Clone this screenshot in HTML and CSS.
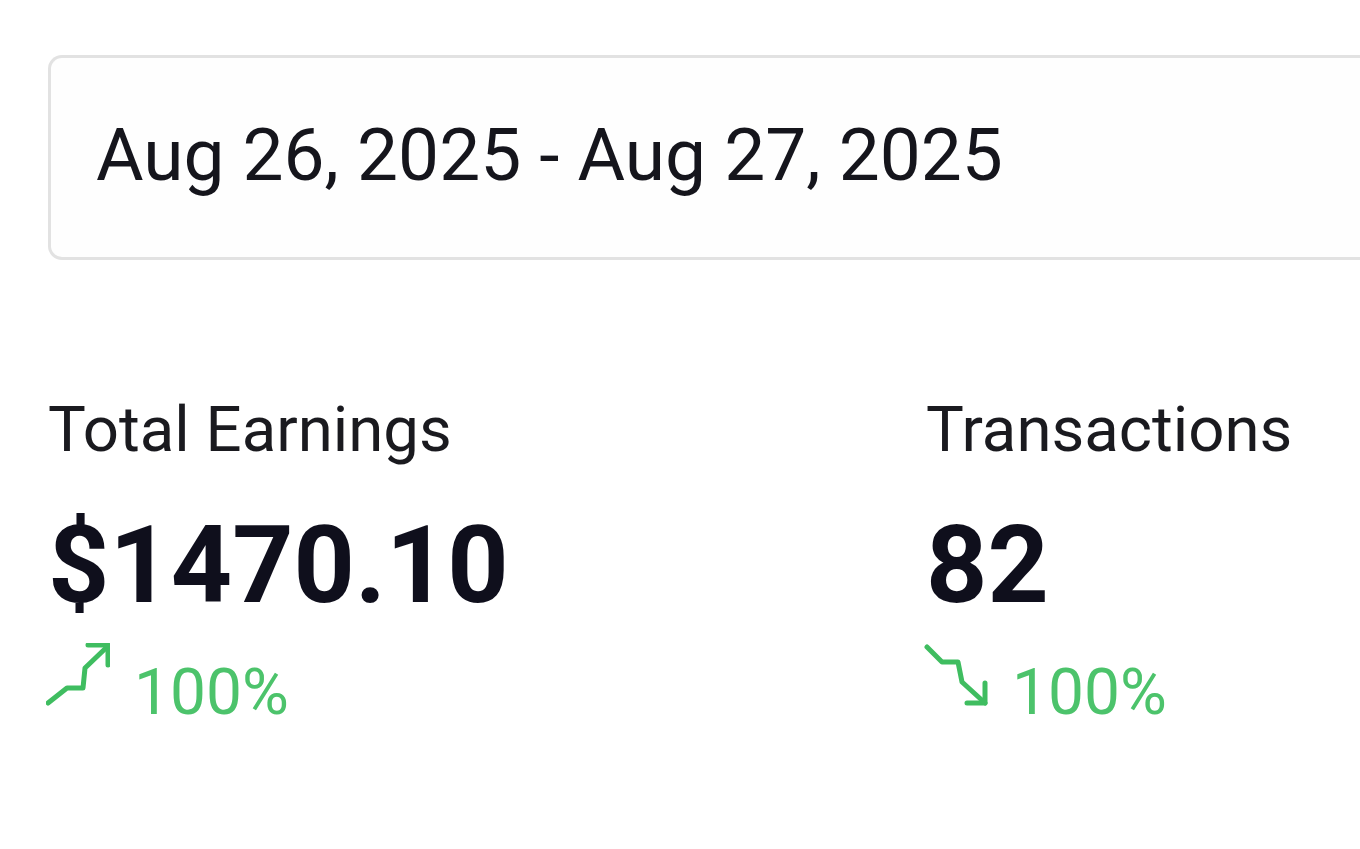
FILE: index.html
```html
<!DOCTYPE html>
<html lang="en">
<head>
<meta charset="utf-8">
<title>Earnings</title>
<link rel="stylesheet" href="styles.css">
</head>
<body>
<main class="page">
  <div class="date-box">
    <span class="date-text">Aug 26, 2025 - Aug 27, 2025</span>
  </div>
  <section class="stats">
    <div class="stat">
      <div class="stat-label">Total Earnings</div>
      <div class="stat-value">$1470.10</div>
      <div class="stat-change">
        <svg class="trend" viewBox="0 0 64 64" width="64" height="64" aria-hidden="true">
          <polyline points="2,60 21,45 37,45 39,25 62,3" fill="none" stroke="currentColor" stroke-width="5" stroke-linecap="round" stroke-linejoin="round"/>
          <polyline points="42,2 62,2 62,22" fill="none" stroke="currentColor" stroke-width="5" stroke-linecap="round" stroke-linejoin="round"/>
        </svg>
        <span class="pct">100%</span>
      </div>
    </div>
    <div class="stat">
      <div class="stat-label">Transactions</div>
      <div class="stat-value">82</div>
      <div class="stat-change">
        <svg class="trend" viewBox="0 0 64 64" width="64" height="64" aria-hidden="true">
          <polyline points="3,4 18,19 34,19 38,39 61,60" fill="none" stroke="currentColor" stroke-width="5" stroke-linecap="round" stroke-linejoin="round"/>
          <polyline points="61,40 61,60 43,60" fill="none" stroke="currentColor" stroke-width="5" stroke-linecap="round" stroke-linejoin="round"/>
        </svg>
        <span class="pct">100%</span>
      </div>
    </div>
  </section>
</main>
</body>
</html>
```
FILE: styles.css
```css
html, body {
  margin: 0;
  padding: 0;
  background: #ffffff;
  overflow: hidden;
}

body {
  font-family: Roboto, "Noto Sans", "Liberation Sans", sans-serif;
  color: #12121c;
}

.page {
  padding: 55px 0 0 48px;
  width: 1360px;
  box-sizing: border-box;
}

.date-box {
  height: 205px;
  box-sizing: border-box;
  border: 3px solid #e2e2e2;
  border-right: 0;
  border-radius: 14px 0 0 14px;
  display: flex;
  align-items: center;
  padding-left: 45px;
  background: #fefefe;
}

.date-text {
  font-size: 73px;
  line-height: 1;
  font-weight: 400;
  color: #15151c;
  margin-top: -4px;
}

.stats {
  display: grid;
  grid-template-columns: 878px 1fr;
  margin-top: 138px;
}

.stat {
  display: flex;
  flex-direction: column;
  align-items: flex-start;
}

.stat-label {
  font-size: 63.5px;
  line-height: 64px;
  font-weight: 400;
  color: #1a1a1f;
}

.stat-value {
  margin-top: 51px;
  font-size: 107px;
  line-height: 106px;
  font-weight: 700;
  color: #0f0f1c;
}

.stat-change {
  display: flex;
  align-items: flex-start;
  gap: 24px;
  margin-top: 24px;
  color: #3fbd60;
}

.trend {
  display: block;
  margin-left: -2px;
  flex: none;
}

.pct {
  font-size: 64px;
  line-height: 64px;
  margin-top: 18px;
  color: #4cc36b;
}
```
